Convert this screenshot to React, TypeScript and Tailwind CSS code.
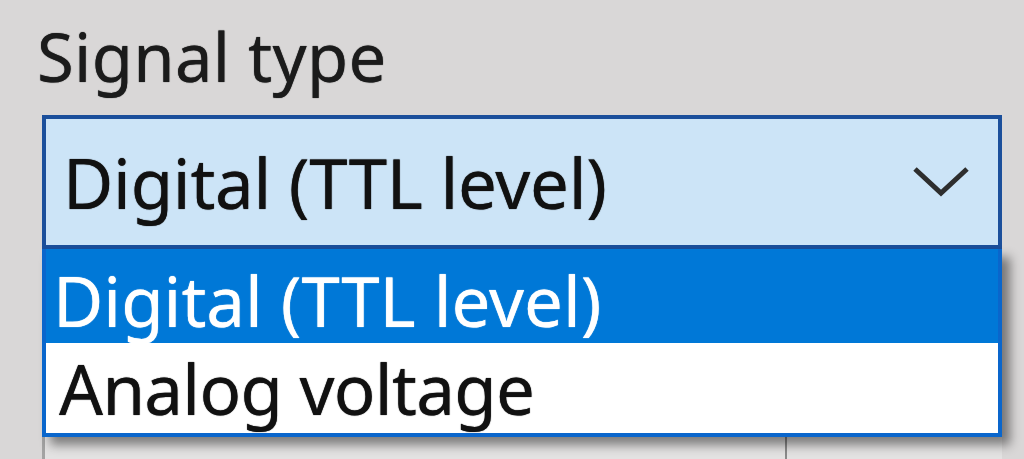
export default function App() {
  return (
    <div
      className="relative h-[459px] w-[1024px] overflow-hidden bg-[#d9d7d7]"
      style={{ fontFamily: '"Noto Sans", "Open Sans", sans-serif' }}
    >
      {/* Label */}
      <div className="pl-[37px] pt-[23px] text-[67px] leading-[67px] tracking-[0.3px] text-[#1b1b1b] [text-shadow:0_0_1px_#1b1b1b]">
        Signal type
      </div>

      {/* Combo box (closed part) */}
      <div className="ml-[42px] mt-[25px] flex h-[134px] w-[960px] items-center justify-between border-4 border-[#1b4f9b] bg-[#cce4f7] pl-[17px] pr-[28px]">
        <span className="text-[69px] leading-[69px] tracking-[-0.25px] text-[#111] [text-shadow:0_0_1px_#111]">
          Digital (TTL level)
        </span>
        <svg width="58" height="32" viewBox="0 0 58 32" className="mt-[-2px]">
          <polyline points="3,4 29,28 55,4" fill="none" stroke="#2e2e2e" strokeWidth="5" />
        </svg>
      </div>

      {/* Dropdown list */}
      <div className="relative z-10 ml-[42px] w-[960px] border-x-4 border-b-4 border-[#0a66cc] shadow-[8px_8px_10px_rgba(0,0,0,0.45)]">
        <div className="h-[94px] bg-[#0078d7] pl-[7px] pt-[17px] text-[69px] leading-[69px] text-white [text-shadow:0_0_1px_#fff]">
          Digital (TTL level)
        </div>
        <div className="h-[90px] bg-white pl-[13px] pt-[11px] text-[69px] leading-[69px] tracking-[-0.7px] text-[#111] [text-shadow:0_0_1px_#111]">
          Analog voltage
        </div>
      </div>

      {/* Control partly hidden under the list */}
      <div className="ml-[42px] flex h-[30px] w-[960px] border-l-[3px] border-[#a3a3a3] bg-[#e3e2e2]">
        <div className="w-[742px] border-r-2 border-[#8a8a8a]" />
      </div>
    </div>
  );
}
